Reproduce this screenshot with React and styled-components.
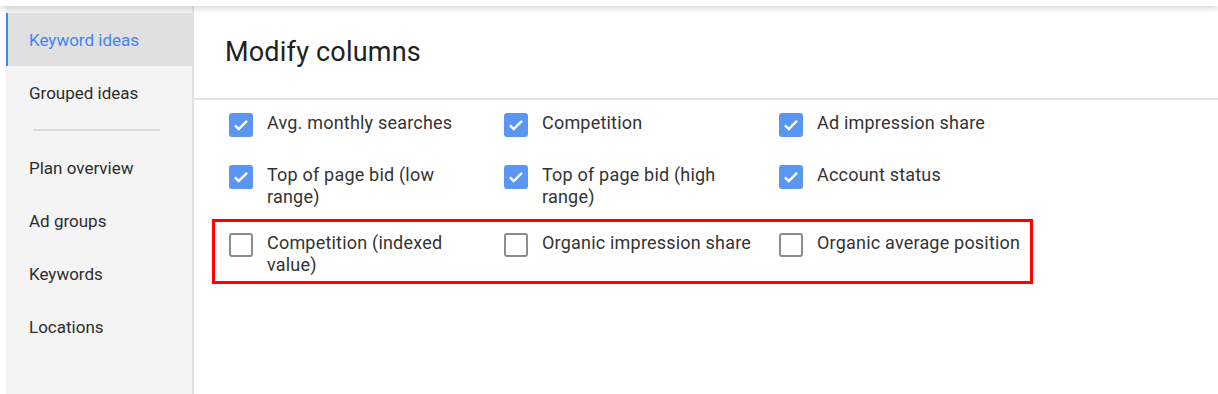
import styled, { createGlobalStyle } from 'styled-components';

const GlobalStyle = createGlobalStyle`
    body {
        margin: 0;
        background: #fff;
        font-family: Roboto, 'Noto Sans', sans-serif;
    }
`

const TopBar = styled.div`
    height: 6px;
    background: #fff;
    position: relative;
    z-index: 2;
    box-shadow: 0 2px 6px rgba(0, 0, 0, 0.18);
`

const Layout = styled.div`
    display: flex;
    height: 388px;
`

const Sidebar = styled.nav`
    width: 186px;
    margin-left: 6px;
    padding-top: 7px;
    background: #f4f4f4;
    border-right: 2px solid #e2e2e2;
    box-sizing: content-box;
`

const NavItem = styled.div`
    height: 53px;
    display: flex;
    align-items: center;
    padding-left: ${({ active }) => (active ? '21px' : '23px')};
    border-left: ${({ active }) => (active ? '2px solid #4285f4' : 'none')};
    background: ${({ active }) => (active ? '#e0e0e0' : 'transparent')};
    color: ${({ active }) => (active ? '#4285f4' : '#2d2d2d')};
    font-size: 17px;
`

const Divider = styled.div`
    height: 22px;
    display: flex;
    align-items: center;
    padding-left: 27px;

    &::before {
        content: '';
        width: 127px;
        height: 2px;
        background: #dcdcdc;
    }
`

const Main = styled.main`
    flex: 1;
`

const Header = styled.div`
    height: 92px;
    display: flex;
    align-items: center;
    padding-left: 31px;
    border-bottom: 2px solid #e2e2e2;
`

const Title = styled.h1`
    margin: 0;
    font-size: 27px;
    font-weight: 400;
    letter-spacing: 0.2px;
    color: #212121;
`

const Options = styled.div`
    padding: 12px 0 0 35px;
`

const Row = styled.div`
    display: grid;
    grid-template-columns: repeat(3, 275px);
    position: relative;

    ${({ highlight }) => highlight && `
        &::after {
            content: '';
            position: absolute;
            left: -17px;
            top: -13px;
            width: 821px;
            height: 65px;
            box-sizing: border-box;
            border: 3px solid #ff0000;
        }
    `}
`

const Option = styled.label`
    display: flex;
    gap: 14px;
    min-height: 29px;
    padding-bottom: ${({ tall }) => (tall ? '24px' : '23px')};
`

const Box = styled.span`
    flex: none;
    width: 24px;
    height: 24px;
    margin-top: 1px;
    border-radius: 3px;
    box-sizing: border-box;
    display: flex;
    align-items: center;
    justify-content: center;
    background: ${({ checked }) => (checked ? '#5b96f4' : '#fff')};
    border: ${({ checked }) => (checked ? 'none' : '2px solid #8c8c8c')};
`

const Label = styled.span`
    max-width: 215px;
    font-size: 18px;
    letter-spacing: 0.2px;
    line-height: 22px;
    color: #333;
`

const navItems = ['Keyword ideas', 'Grouped ideas', null, 'Plan overview', 'Ad groups', 'Keywords', 'Locations'];

const rows = [
    { items: [['Avg. monthly searches', true], ['Competition', true], ['Ad impression share', true]] },
    { tall: true, items: [['Top of page bid (low range)', true], ['Top of page bid (high range)', true], ['Account status', true]] },
    { highlight: true, items: [['Competition (indexed value)', false], ['Organic impression share', false], ['Organic average position', false]] },
];

function Check({ checked }) {
    return (
        <Box checked={checked}>
            {checked && (
                <svg width="18" height="18" viewBox="0 0 24 24">
                    <path d="M4 12.5l5 5L20 6.5" fill="none" stroke="#fff" strokeWidth="3.2" />
                </svg>
            )}
        </Box>
    )
}

function App() {
    return (
        <>
            <GlobalStyle />
            <TopBar />
            <Layout>
                <Sidebar>
                    {navItems.map((item, i) =>
                        item ? <NavItem key={i} active={i === 0}>{item}</NavItem> : <Divider key={i} />
                    )}
                </Sidebar>
                <Main>
                    <Header>
                        <Title>Modify columns</Title>
                    </Header>
                    <Options>
                        {rows.map((row, i) => (
                            <Row key={i} highlight={row.highlight}>
                                {row.items.map(([text, checked]) => (
                                    <Option key={text} tall={row.tall}>
                                        <Check checked={checked} />
                                        <Label>{text}</Label>
                                    </Option>
                                ))}
                            </Row>
                        ))}
                    </Options>
                </Main>
            </Layout>
        </>
    )
}

export default App
